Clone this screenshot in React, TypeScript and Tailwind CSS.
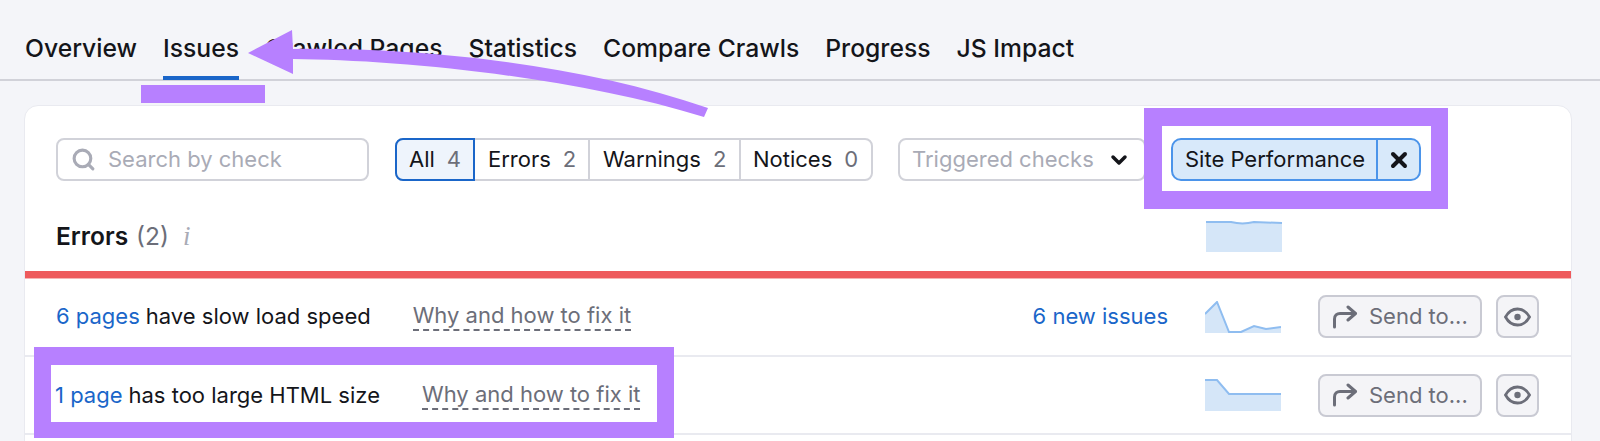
import { Search, ChevronDown, X } from "lucide-react";

const font = { fontFamily: "Inter, 'Liberation Sans', sans-serif" };

function SendButtons() {
  return (
    <div className="flex items-center gap-[14px]">
      <div className="flex h-[43px] w-[164px] items-center gap-[11px] rounded-[8px] border-2 border-[#c9cad3] bg-[#f4f4f7] pl-[12px] text-[22px] text-[#6c6e79]">
        <svg width="26" height="24" viewBox="0 0 26 24" fill="none" stroke="#6c6e79" strokeWidth="3" strokeLinecap="round" strokeLinejoin="round">
          <path d="M2.500 22V14C2.500 10.500 5 8.500 8 8.500H23" />
          <path d="M16 2L23.500 8.500L16 15" />
        </svg>
        <span>Send to...</span>
      </div>
      <div className="flex h-[43px] w-[43px] items-center justify-center rounded-[8px] border-2 border-[#c9cad3] bg-[#f4f4f7]">
        <svg width="27" height="20" viewBox="0 0 27 20" fill="none">
          <path d="M1.500 10C4.500 4.500 8.500 2 13.500 2S22.500 4.500 25.500 10C22.500 15.500 18.500 18 13.500 18S4.500 15.500 1.500 10Z" stroke="#6c6e79" strokeWidth="2.800" />
          <circle cx="13.500" cy="10" r="3.200" fill="#6c6e79" />
        </svg>
      </div>
    </div>
  );
}

function Spark({ line, h }: { line: string; h: number }) {
  return (
    <svg width="76" height={h} viewBox={`0 0 76 ${h}`}>
      <path d={`${line} L76 ${h} L0 ${h} Z`} fill="#d5e6f8" />
      <path d={line} fill="none" stroke="#8fbdf0" strokeWidth="2" />
    </svg>
  );
}

function Segment({ label, n, className }: { label: string; n: number; className: string }) {
  return (
    <div className={`flex items-center gap-[12px] text-[22px] text-[#14151a] ${className}`}>
      <span>{label}</span>
      <span className="text-[#6c6e79]">{n}</span>
    </div>
  );
}

export default function App() {
  return (
    <div style={font} className="relative h-[441px] w-[1600px] overflow-hidden bg-[#f4f5f9]">
      <nav className="flex h-[81px] items-end gap-[26px] border-b-2 border-[#d1d2d9] pl-[25px] text-[24.700px] font-medium leading-none text-[#14151a]">
        <div className="pb-[18px]">Overview</div>
        <div className="relative pb-[18px]">
          Issues
          <div className="absolute bottom-[-1px] left-0 right-0 h-[4px] bg-[#1a66c9]" />
        </div>
        <div className="pb-[18px]">Crawled Pages</div>
        <div className="pb-[18px]">Statistics</div>
        <div className="pb-[18px]">Compare Crawls</div>
        <div className="pb-[18px]">Progress</div>
        <div className="pb-[18px]">JS Impact</div>
      </nav>

      <main className="ml-[24px] mt-[24px] h-[400px] w-[1548px] rounded-t-[14px] border border-[#e9eaf0] bg-white">
        <div className="mt-[32px] flex h-[43px] items-center pl-[31px]">
          <div className="flex h-[43px] w-[313px] items-center gap-[12px] rounded-[8px] border-2 border-[#d1d2d9] pl-[13px] text-[22px] text-[#a9abb6]">
            <Search size={25} strokeWidth={3} className="text-[#a9abb6]" />
            <span>Search by check</span>
          </div>
          <div className="ml-[26px] flex h-[43px] w-[478px] rounded-[8px] border-2 border-[#d1d2d9]">
            <Segment label="All" n={4} className="-my-[2px] -ml-[2px] h-[43px] w-[80px] rounded-l-[8px] border-2 border-[#1a66c9] bg-[#eef4fc] pl-[12px]" />
            <Segment label="Errors" n={2} className="w-[115px] border-r-2 border-[#d1d2d9] pl-[13px]" />
            <Segment label="Warnings" n={2} className="w-[151px] border-r-2 border-[#d1d2d9] pl-[13px]" />
            <Segment label="Notices" n={0} className="flex-1 pl-[12px]" />
          </div>
          <div className="ml-[25px] flex h-[43px] w-[248px] items-center justify-between rounded-[8px] border-2 border-[#d1d2d9] pl-[12px] pr-[13px] text-[22px] text-[#a9abb6]">
            <span>Triggered checks</span>
            <ChevronDown size={24} strokeWidth={3.500} className="text-[#14151a]" />
          </div>
          <div className="ml-[25px] flex h-[43px] w-[250px] items-center rounded-[10px] border-2 border-[#4b94ea] bg-[#d8e9fa] text-[22px] text-[#14151a]">
            <span className="flex h-full flex-1 items-center border-r-2 border-[#4b94ea] pl-[12px]">Site Performance</span>
            <span className="flex w-[41px] items-center justify-center">
              <X size={24} strokeWidth={4} />
            </span>
          </div>
        </div>

        <div className="flex h-[90px] items-center pl-[31px] pr-[289px] pt-[20px]">
          <div className="text-[24.500px] font-semibold text-[#14151a]">Errors</div>
          <div className="ml-[8px] text-[24.500px] text-[#6c6e79]">(2)</div>
          <div className="ml-[14px] font-['Liberation_Serif',serif] text-[27px] italic text-[#a9abb6]">i</div>
          <div className="ml-auto">
            <Spark line="M0 1 L25 1 C33 3 40 3 48 1 L76 2" h={31} />
          </div>
        </div>

        <div className="h-[8px] border-b border-[#f6b4b4] bg-[#ee5a5c]" />

        <div className="flex h-[78px] items-center border-b-2 border-[#e9eaf0] pb-[1px] pl-[31px] pr-[32px] text-[22px]">
          <span className="text-[#1a66c9]">6 pages</span>
          <span className="ml-[6px] text-[#14151a]">have slow load speed</span>
          <span className="ml-[42px] border-b-2 border-dashed border-[#6c6e79] leading-[27px] text-[#6c6e79]">Why and how to fix it</span>
          <span className="ml-auto text-[#1a66c9]">6 new issues</span>
          <div className="ml-[37px] mr-[37px]">
            <Spark line="M0 13 L12 1 L24 31 L36 31 L49 25 L61 28 L76 26" h={32} />
          </div>
          <SendButtons />
        </div>

        <div className="flex h-[78px] items-center border-b-2 border-[#e9eaf0] pl-[30px] pr-[32px] text-[22px]">
          <span className="text-[#1a66c9]">1 page</span>
          <span className="ml-[6px] text-[#14151a]">has too large HTML size</span>
          <span className="ml-[42px] border-b-2 border-dashed border-[#6c6e79] leading-[27px] text-[#6c6e79]">Why and how to fix it</span>
          <div className="ml-auto mr-[37px]">
            <Spark line="M0 1 L12 1 L24 15 L76 15" h={32} />
          </div>
          <SendButtons />
        </div>
      </main>

      {/* Purple annotations */}
      <div className="absolute left-[141px] top-[85px] h-[18px] w-[124px] bg-[#b780ff]" />
      <div className="absolute left-[1144px] top-[108px] h-[101px] w-[304px] border-y-[18px] border-l-[18px] border-r-[17px] border-[#b780ff]" />
      <div className="absolute left-[34px] top-[347px] h-[91px] w-[640px] border-x-[17px] border-b-[16px] border-t-[18px] border-[#b780ff]" />
      <svg className="absolute left-0 top-0" width="800" height="130" viewBox="0 0 800 130">
        <path d="M248 53L292 30L293 49C400 47 570 60 708 108L704 117C570 76 400 60 293 59L293 74Z" fill="#b780ff" />
      </svg>
    </div>
  );
}
